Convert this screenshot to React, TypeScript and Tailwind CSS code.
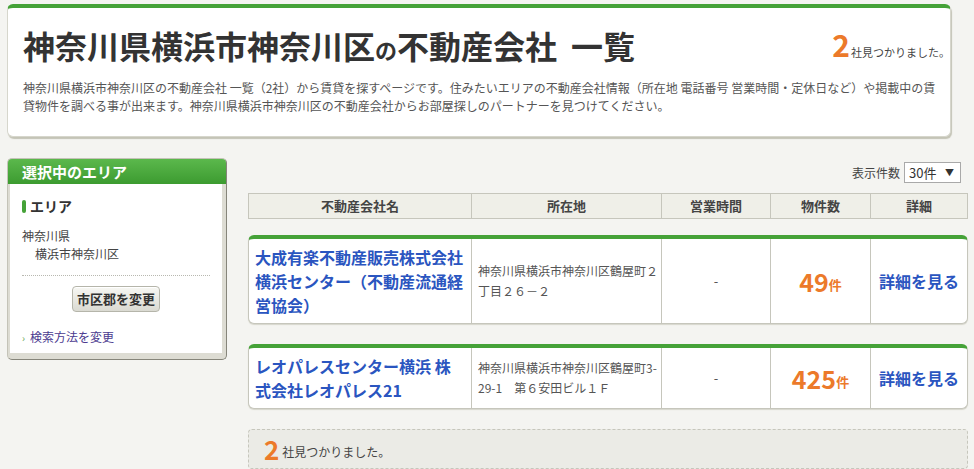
import React from "react";

const rows = [
  {
    name: "大成有楽不動産販売株式会社横浜センター（不動産流通経営協会）",
    addr: ["神奈川県横浜市神奈川区鶴屋町２", "丁目２６－２"],
    count: "49",
  },
  {
    name: "レオパレスセンター横浜 株式会社レオパレス21",
    addr: ["神奈川県横浜市神奈川区鶴屋町3-", "29-1　第６安田ビル１Ｆ"],
    count: "425",
  },
];

const cols = "grid grid-cols-[222px_190px_109px_100px_97px]";

export default function App() {
  return (
    <div className="w-[974px] h-[469px] overflow-hidden bg-[#f4f4f1] pt-[4px] font-['Noto_Sans_CJK_JP','Noto_Sans',sans-serif] text-[#333]">
      {/* Header card */}
      <div className="ml-[7px] w-[944px] h-[133px] bg-white rounded-[6px] border border-[#d6d6cc] border-t-[4px] border-t-[#45a238] shadow-[1px_2px_1px_#c4c4b6] px-[15px] pt-[19px]">
        <div className="flex items-center justify-between h-[40px] mr-[-15px]">
          <h1 className="text-[32px] leading-[40px] font-bold text-[#333] whitespace-nowrap">
            神奈川県横浜市神奈川区<span className="text-[22px]">の</span>不動産会社<span className="ml-[14px]">一覧</span>
          </h1>
          <div className="flex items-baseline mt-[-4px]">
            <span className="text-[30px] font-bold text-[#ec7a2a] leading-none">2</span>
            <span className="text-[11px] text-[#444] ml-[1px]">社見つかりました。</span>
          </div>
        </div>
        <p className="mt-[12px] text-[12px] leading-[18px] text-[#555] whitespace-nowrap">
          神奈川県横浜市神奈川区の不動産会社 一覧（2社）から賃貸を探すページです。住みたいエリアの不動産会社情報（所在地 電話番号 営業時間・定休日など）や掲載中の賃
          <br />
          貸物件を調べる事が出来ます。神奈川県横浜市神奈川区の不動産会社からお部屋探しのパートナーを見つけてください。
        </p>
      </div>

      <div className="flex mt-[21px] ml-[7px]">
        {/* Sidebar */}
        <div className="w-[220px] self-start rounded-[5px] overflow-hidden border border-[#c4c3b8] border-r-[#86857a] border-b-[#86857a] bg-[#dddcd3]">
          <div className="h-[25px] bg-gradient-to-b from-[#5bb84c] to-[#3c9b30] text-white font-bold text-[15px] leading-[25px] pl-[14px]">
            選択中のエリア
          </div>
          <div className="ml-[2px] mr-[4px] mb-[6px] bg-white px-[12px] pt-[13px] pb-[6px]">
            <div className="flex items-center h-[18px]">
              <span className="w-[4px] h-[13px] rounded-[2px] bg-[#45a238] mr-[4px]" />
              <span className="text-[14px] font-bold text-[#333]">エリア</span>
            </div>
            <div className="mt-[12px] text-[12px] leading-[18px] text-[#444]">
              <div>神奈川県</div>
              <div className="pl-[13px]">横浜市神奈川区</div>
            </div>
            <div className="mt-[12px] border-t border-dotted border-[#b8b8b0]" />
            <div className="flex justify-center mt-[10px]">
              <button className="w-[88px] h-[26px] rounded-[4px] border border-[#b5b5aa] bg-gradient-to-b from-[#f7f7f3] to-[#dadad2] text-[13px] font-bold text-[#333] shadow-[0_1px_0_#ffffff_inset]">
                市区郡を変更
              </button>
            </div>
            <div className="mt-[15px] flex items-center h-[20px] text-[12px]">
              <span className="text-[#6aa84f] text-[10px] mr-[5px]">›</span>
              <span className="text-[#4b3a8f]">検索方法を変更</span>
            </div>
          </div>
        </div>

        {/* Main */}
        <div className="ml-[21px] w-[720px]">
          <div className="flex justify-end items-center mt-[4px] h-[21px] pr-[7px]">
            <span className="text-[12px] text-[#444] mr-[4px]">表示件数</span>
            <div className="w-[57px] h-[21px] border border-[#a9a9a9] bg-white flex items-center justify-between pl-[4px] pr-[6px] text-[13px] text-[#333]">
              <span>30件</span>
              <span className="text-[9px]">▼</span>
            </div>
          </div>

          {/* Table header */}
          <div className={`${cols} mt-[10px] h-[26px] border border-[#c6c6bc] bg-[#efefe8] text-[13px] font-bold text-[#444]`}>
            <div className="flex items-center justify-center">不動産会社名</div>
            <div className="flex items-center justify-center border-l border-[#c6c6bc]">所在地</div>
            <div className="flex items-center justify-center border-l border-[#c6c6bc]">営業時間</div>
            <div className="flex items-center justify-center border-l border-[#c6c6bc]">物件数</div>
            <div className="flex items-center justify-center border-l border-[#c6c6bc]">詳細</div>
          </div>

          {rows.map((r, i) => (
            <div
              key={i}
              className={`${cols} ${i === 0 ? "mt-[16px]" : "mt-[20px]"} bg-white rounded-[6px] border border-[#c6c6bc] border-t-[4px] border-t-[#45a238] shadow-[0_1px_1px_#d6d6cc]`}
            >
              <div className="pl-[6px] pr-[7px] py-[6px] text-[16px] leading-[24px] font-bold text-[#2a55c0]">
                {r.name}
              </div>
              <div className="border-l border-[#c6c6bc] pl-[6px] pr-[1px] flex flex-col justify-center text-[12px] leading-[20px] text-[#555] whitespace-nowrap">
                <div>{r.addr[0]}</div>
                <div>{r.addr[1]}</div>
              </div>
              <div className="border-l border-[#c6c6bc] flex items-center justify-center text-[13px] text-[#555]">
                -
              </div>
              <div className="border-l border-[#c6c6bc] flex items-center justify-center text-[#ec7a2a] font-bold">
                <span className="text-[25px] leading-none">{r.count}</span>
                <span className="text-[13px] leading-none mt-[7px]">件</span>
              </div>
              <div className="border-l border-[#c6c6bc] flex items-center justify-center text-[16px] font-bold text-[#2a55c0]">
                詳細を見る
              </div>
            </div>
          ))}

          {/* Footer */}
          <div className="mt-[20px] h-[40px] rounded-[4px] border border-dashed border-[#c6c6bc] bg-[#ebebe6] flex items-center pl-[15px]">
            <span className="text-[26px] font-bold text-[#ec7a2a] leading-none">2</span>
            <span className="text-[12px] text-[#444] ml-[3px] mt-[5px]">社見つかりました。</span>
          </div>
        </div>
      </div>
    </div>
  );
}
